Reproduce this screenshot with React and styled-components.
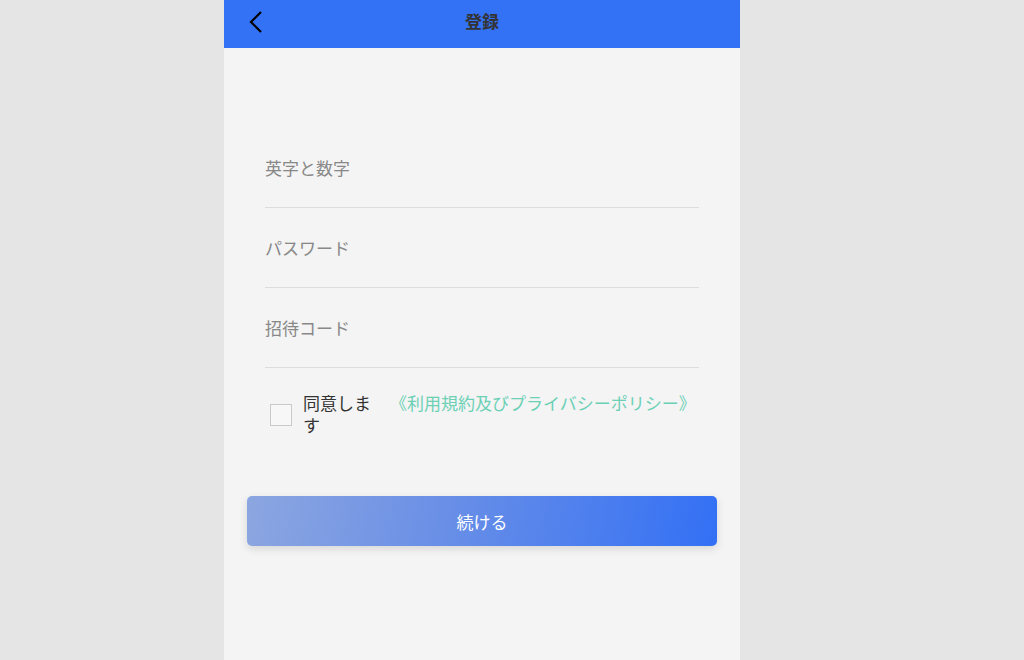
import React, { useState } from "react";
import styled, { createGlobalStyle } from "styled-components";

const GlobalStyle = createGlobalStyle`
  html, body {
    margin: 0;
    padding: 0;
    background: #e5e5e5;
    font-family: "Noto Sans", "Noto Sans CJK JP", sans-serif;
  }
`;

const fields = [
  { key: "user", placeholder: "英字と数字", type: "text" },
  { key: "pass", placeholder: "パスワード", type: "password" },
  { key: "code", placeholder: "招待コード", type: "text" },
];

const App = () => {
  const [agree, setAgree] = useState(false);
  const [values, setValues] = useState({ user: "", pass: "", code: "" });

  return (
    <Page>
      <GlobalStyle />
      <Phone>
        <Header>
          <BackButton aria-label="back">
            <svg width="14" height="22" viewBox="0 0 14 22" fill="none">
              <path d="M12 1 L2 11 L12 21" stroke="#000" strokeWidth="2.2" />
            </svg>
          </BackButton>
          <Title>登録</Title>
        </Header>
        <Body>
          <Form>
            {fields.map((f) => (
              <Field key={f.key}>
                <Input
                  type={f.type}
                  placeholder={f.placeholder}
                  value={values[f.key]}
                  onChange={(e) =>
                    setValues({ ...values, [f.key]: e.target.value })
                  }
                />
              </Field>
            ))}
            <AgreeRow>
              <Checkbox checked={agree} onClick={() => setAgree(!agree)} />
              <AgreeLabel>同意します</AgreeLabel>
              <PolicyLink>《利用規約及びプライバシーポリシー》</PolicyLink>
            </AgreeRow>
          </Form>
          <SubmitButton>続ける</SubmitButton>
        </Body>
      </Phone>
    </Page>
  );
};

export default App;

const Page = styled.div`
  width: 1024px;
  height: 660px;
  display: flex;
  padding-left: 224px;
  box-sizing: border-box;
  overflow: hidden;
`;

const Phone = styled.div`
  width: 516px;
  height: 660px;
  background: #f4f4f4;
  display: flex;
  flex-direction: column;
`;

const Header = styled.div`
  height: 48px;
  background: #3371f5;
  display: flex;
  align-items: center;
  justify-content: center;
  position: relative;
`;

const BackButton = styled.div`
  position: absolute;
  left: 25px;
  top: 11px;
  display: flex;
`;

const Title = styled.div`
  font-size: 17px;
  font-weight: 700;
  color: #333;
  margin-top: -7px;
`;

const Body = styled.div`
  padding: 80px 23px 0;
  display: flex;
  flex-direction: column;
`;

const Form = styled.div`
  padding: 0 18px;
  display: flex;
  flex-direction: column;
`;

const Field = styled.div`
  height: 80px;
  border-bottom: 1px solid #dcdcdc;
  display: flex;
  align-items: center;
  box-sizing: border-box;
  padding-top: 1px;
`;

const Input = styled.input`
  width: 100%;
  border: none;
  outline: none;
  background: transparent;
  font-family: inherit;
  font-size: 17px;
  color: #333;
  padding: 0;
  &::placeholder {
    color: #888;
  }
`;

const AgreeRow = styled.div`
  margin-top: 25px;
  display: flex;
  align-items: center;
  padding-left: 5px;
`;

const Checkbox = styled.div`
  width: 22px;
  height: 22px;
  box-sizing: border-box;
  border: 1px solid #cacaca;
  background: ${(p) => (p.checked ? "#3371f5" : "#f7f7f7")};
  flex-shrink: 0;
  cursor: pointer;
`;

const AgreeLabel = styled.div`
  width: 76px;
  margin-left: 11px;
  font-size: 17px;
  line-height: 22px;
  color: #333;
`;

const PolicyLink = styled.div`
  margin-left: 11px;
  font-size: 17px;
  line-height: 22px;
  color: #6bd0b4;
  white-space: nowrap;
  margin-top: -22px;
`;

const SubmitButton = styled.button`
  margin-top: 59px;
  height: 50px;
  width: 470px;
  border: none;
  border-radius: 5px;
  background: linear-gradient(100deg, #8ca6e0 0%, #6b90e6 40%, #3370f5 100%);
  box-shadow: 0 3px 8px rgba(0, 0, 0, 0.12);
  color: #fff;
  font-family: inherit;
  font-size: 17px;
  cursor: pointer;
`;
